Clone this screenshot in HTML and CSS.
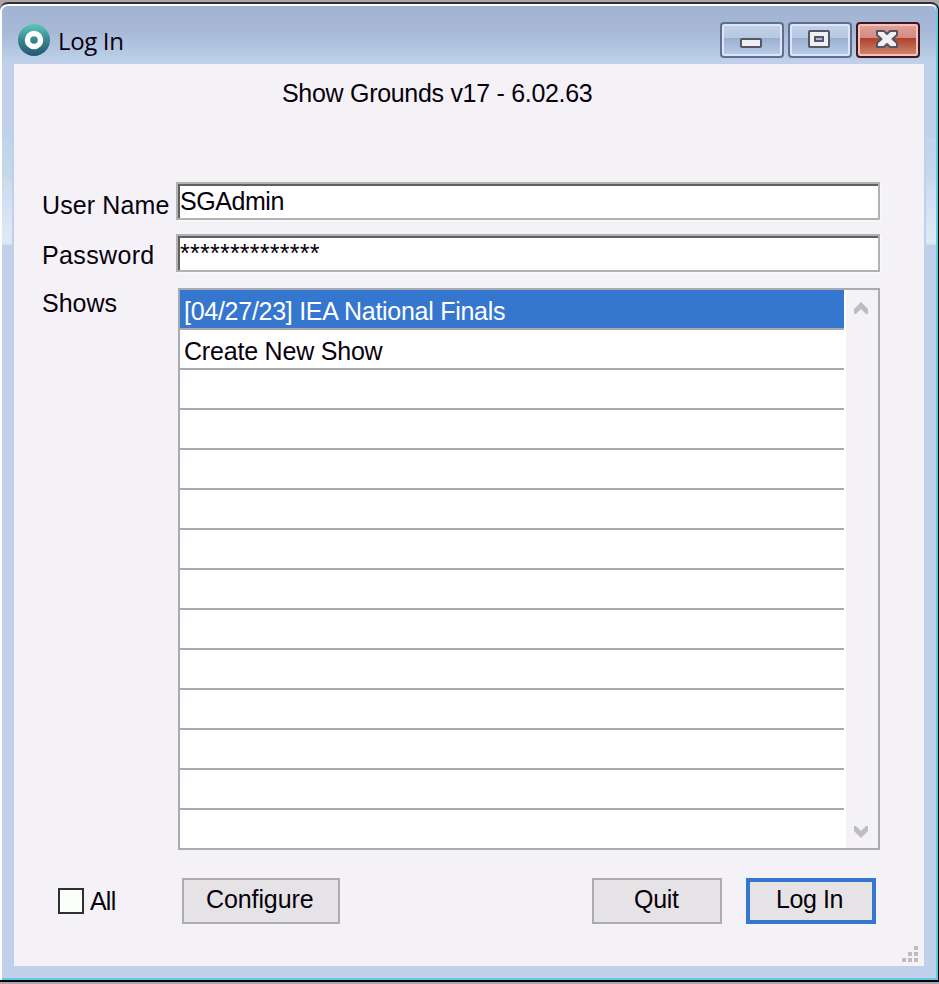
FILE: index.html
```html
<!DOCTYPE html>
<html lang="en">
<head>
<meta charset="utf-8">
<title>Log In</title>
<link rel="stylesheet" href="styles.css">
</head>
<body>
<div class="window">
  <header class="titlebar">
    <svg class="logo" width="32" height="32" viewBox="0 0 32 32">
      <defs><linearGradient id="lg" x1="0" y1="0" x2="0" y2="1"><stop offset="0" stop-color="#5cc8bc"/><stop offset=".5" stop-color="#38868f"/><stop offset="1" stop-color="#235577"/></linearGradient></defs>
      <circle cx="16" cy="16" r="16" fill="url(#lg)"/>
      <circle cx="16" cy="16" r="6.500" fill="none" stroke="#fff" stroke-width="5.500"/>
    </svg>
    <span class="caption"><span class="t t-title">Log In</span></span>
    <div class="controls">
      <div class="ctl"><svg width="64" height="36" viewBox="0 0 64 36"><rect x="21" y="17" width="20" height="8" rx="1" fill="#f0f0f0" stroke="#535666" stroke-width="2"/></svg></div>
      <div class="ctl"><svg width="64" height="36" viewBox="0 0 64 36"><rect x="21" y="9" width="20" height="16" rx="1" fill="#f0f0f0" stroke="#535666" stroke-width="2"/><rect x="27" y="15" width="8" height="4" fill="#a9bdd8" stroke="#535666" stroke-width="2"/></svg></div>
      <div class="ctl close"><svg width="64" height="36" viewBox="0 0 64 36"><path d="M21 9h7l3 3 3-3h7v4l-4.500 4 4.500 4v4h-7l-3-3-3 3h-7v-4l4.500-4-4.500-4z" fill="#f0f0f0" stroke="#535666" stroke-width="2" stroke-linejoin="round"/></svg></div>
    </div>
  </header>
  <div class="frame">
    <main class="content">
      <h1 class="heading"><span class="t t-head">Show Grounds v17 - 6.02.63</span></h1>
      <div class="row row-user"><label class="label"><span class="t t-user">User Name</span></label><div class="field"><span class="t t-admin">SGAdmin</span></div></div>
      <div class="row row-pass"><label class="label"><span class="t t-pass">Password</span></label><div class="field"><span class="t t-stars">**************</span></div></div>
      <div class="row row-shows"><label class="label label-shows"><span class="t t-shows">Shows</span></label>
        <div class="list">
          <div class="items">
            <div class="item selected"><span class="t t-iea">[04/27/23] IEA National Finals</span></div>
            <div class="item"><span class="t t-create">Create New Show</span></div>
            <div class="item"></div><div class="item"></div><div class="item"></div><div class="item"></div><div class="item"></div><div class="item"></div>
            <div class="item"></div><div class="item"></div><div class="item"></div><div class="item"></div><div class="item"></div><div class="item"></div>
          </div>
          <div class="scroll">
            <svg width="14" height="12" viewBox="0 0 14 12"><path d="M0 12V7L7 0l7 7v5h-2L7 7l-5 5z" fill="#bdbdbd"/></svg>
            <svg width="14" height="12" viewBox="0 0 14 12"><path d="M0 0v5l7 7 7-7V0h-2L7 5 2 0z" fill="#bdbdbd"/></svg>
          </div>
        </div>
      </div>
      <footer class="actions">
        <span class="check"></span><span class="all"><span class="t t-all">All</span></span>
        <button class="btn configure"><span class="t t-conf">Configure</span></button>
        <button class="btn quit"><span class="t t-quit">Quit</span></button>
        <button class="btn login"><span class="t t-login">Log In</span></button>
      </footer>
      <svg class="grip" width="16" height="16" viewBox="0 0 16 16" fill="#bdbdbd"><path d="M12 0h4v4h-4zM6 6h4v4H6zM12 6h4v4h-4zM0 12h4v4H0zM6 12h4v4H6zM12 12h4v4h-4z"/></svg>
    </main>
  </div>
</div>
</body>
</html>
```
FILE: styles.css
```css
* { box-sizing: border-box; }
html, body { margin: 0; height: 984px; overflow: hidden; }
body { background: #aaa8aa; padding: 2px 0; font: 25px/28px "Liberation Sans", sans-serif; color: #08000c; }
.window { width: 939px; height: 980px; border-top: 2px solid #303034; border-right: 1px solid #000; border-bottom: 2px solid #000; border-radius: 8px 8px 0 0; background: #c0d0ea; box-shadow: inset 2px 2px #fff, inset -2px -2px #60c8e8; padding: 2px; overflow: hidden; }
.titlebar { height: 58px; display: flex; align-items: flex-start; padding: 16px 16px 0 16px; background: linear-gradient(#a1b4d2, #a7b9d6 45%, #bbd0e8 54px, #c0d0ea 54px); border-radius: 6px 6px 0 0; }
.logo { margin-top: 2px; display: block; }
.caption { font-family: "Open Sans", sans-serif; font-size: 24px; margin: 5px 0 0 8px; flex: 1; }
.t { display: inline-block; white-space: pre; }
.t-title { letter-spacing: -.35px; }
.t-head { letter-spacing: -.3px; }
.t-user { letter-spacing: .12px; }
.t-pass { letter-spacing: .35px; }
.t-admin { letter-spacing: -.45px; }
.t-stars { letter-spacing: .25px; }
.t-iea { letter-spacing: -.27px; }
.t-create { letter-spacing: -.2px; }
.t-all { letter-spacing: -.8px; }
.t-conf { letter-spacing: -.1px; }
.t-quit { letter-spacing: -.3px; }
.t-login { letter-spacing: -.4px; }
.controls { display: flex; gap: 4px; }
.ctl { width: 64px; height: 36px; border: 2px solid #5f6e91; border-radius: 4px; box-shadow: inset 0 0 0 2px #dbe6f6; background: linear-gradient(#c4d3ea, #b7c8e3 43%, #9aafce 44%, #b9cfec); }
.ctl svg { display: block; margin: -2px; }
.close { border-color: #43151d; box-shadow: inset 0 0 0 2px #efc4c0; background: linear-gradient(#e4a49c, #d38980 43%, #ad4228 44%, #d28a78); }
.frame {
  --glow: linear-gradient(#bfd5ee, #c6d8e8 36%, #cbdbe6 40%, #cfdef4 50%, #d9e4f5 75%, #e0eaf4 97%, #cfdef0);
  padding: 0 10px 0 12px;
  margin-left: -2px;
  padding-left: 14px;
  margin-right: -2px;
  background: var(--glow) 2px 74px / 10px 107px no-repeat, var(--glow) 926px 74px / 10px 107px no-repeat;
}
.frame { margin-left: -2px; }
.content { width: 910px; height: 902px; background: #f4f2f6; display: flex; flex-direction: column; }
.heading { font: inherit; margin: 15px 0 0 268px; height: 28px; }
.row { display: flex; margin-left: 28px; }
.label { width: 134px; flex: none; padding-top: 9px; }
.row-user { margin-top: 75px; height: 38px; }
.row-pass { margin-top: 14px; height: 38px; }
.row-pass .label { padding-top: 7px; }
.field { width: 704px; height: 38px; border: 2px solid #b2b2b2; background: #fff; box-shadow: inset 2px 2px #606060, 2px 2px #f7f8fd; padding: 3px 0 0 2px; }
.row-shows { margin-top: 16px; }
.label-shows { width: 136px; padding-top: 1px; }
.list { width: 702px; height: 562px; border: 2px solid #a9abb2; background: #fff; display: flex; justify-content: space-between; }
.items { width: 664px; }
.item { height: 40px; border-bottom: 2px solid #a9a9ad; padding: 7px 0 0 4px; }
.item:last-child { height: 38px; border-bottom: 0; }
.selected { background: #3576cf; color: #fff; }
.scroll { width: 32px; background: #f4f2f6; display: flex; flex-direction: column; justify-content: space-between; align-items: center; padding: 12px 2px 10px 0; }
.actions { display: flex; margin: 28px 0 0 44px; height: 46px; }
.check { width: 26px; height: 26px; border: 2px solid #2d302d; background: #fbfffc; margin-top: 10px; }
.all { margin: 9px 0 0 6px; width: 92px; }
.btn { font: inherit; color: inherit; text-align: left; height: 46px; border: 2px solid #acacac; background: #e5e3e6; padding: 0 0 5px 0; display: block; }
.configure { width: 158px; padding-left: 22px; }
.quit { width: 130px; margin-left: 252px; padding-left: 40px; }
.login { width: 130px; margin-left: 24px; border: 4px solid #3576cf; padding-left: 26px; }
.grip { align-self: flex-end; margin: 22px 6px 0 0; }
```
